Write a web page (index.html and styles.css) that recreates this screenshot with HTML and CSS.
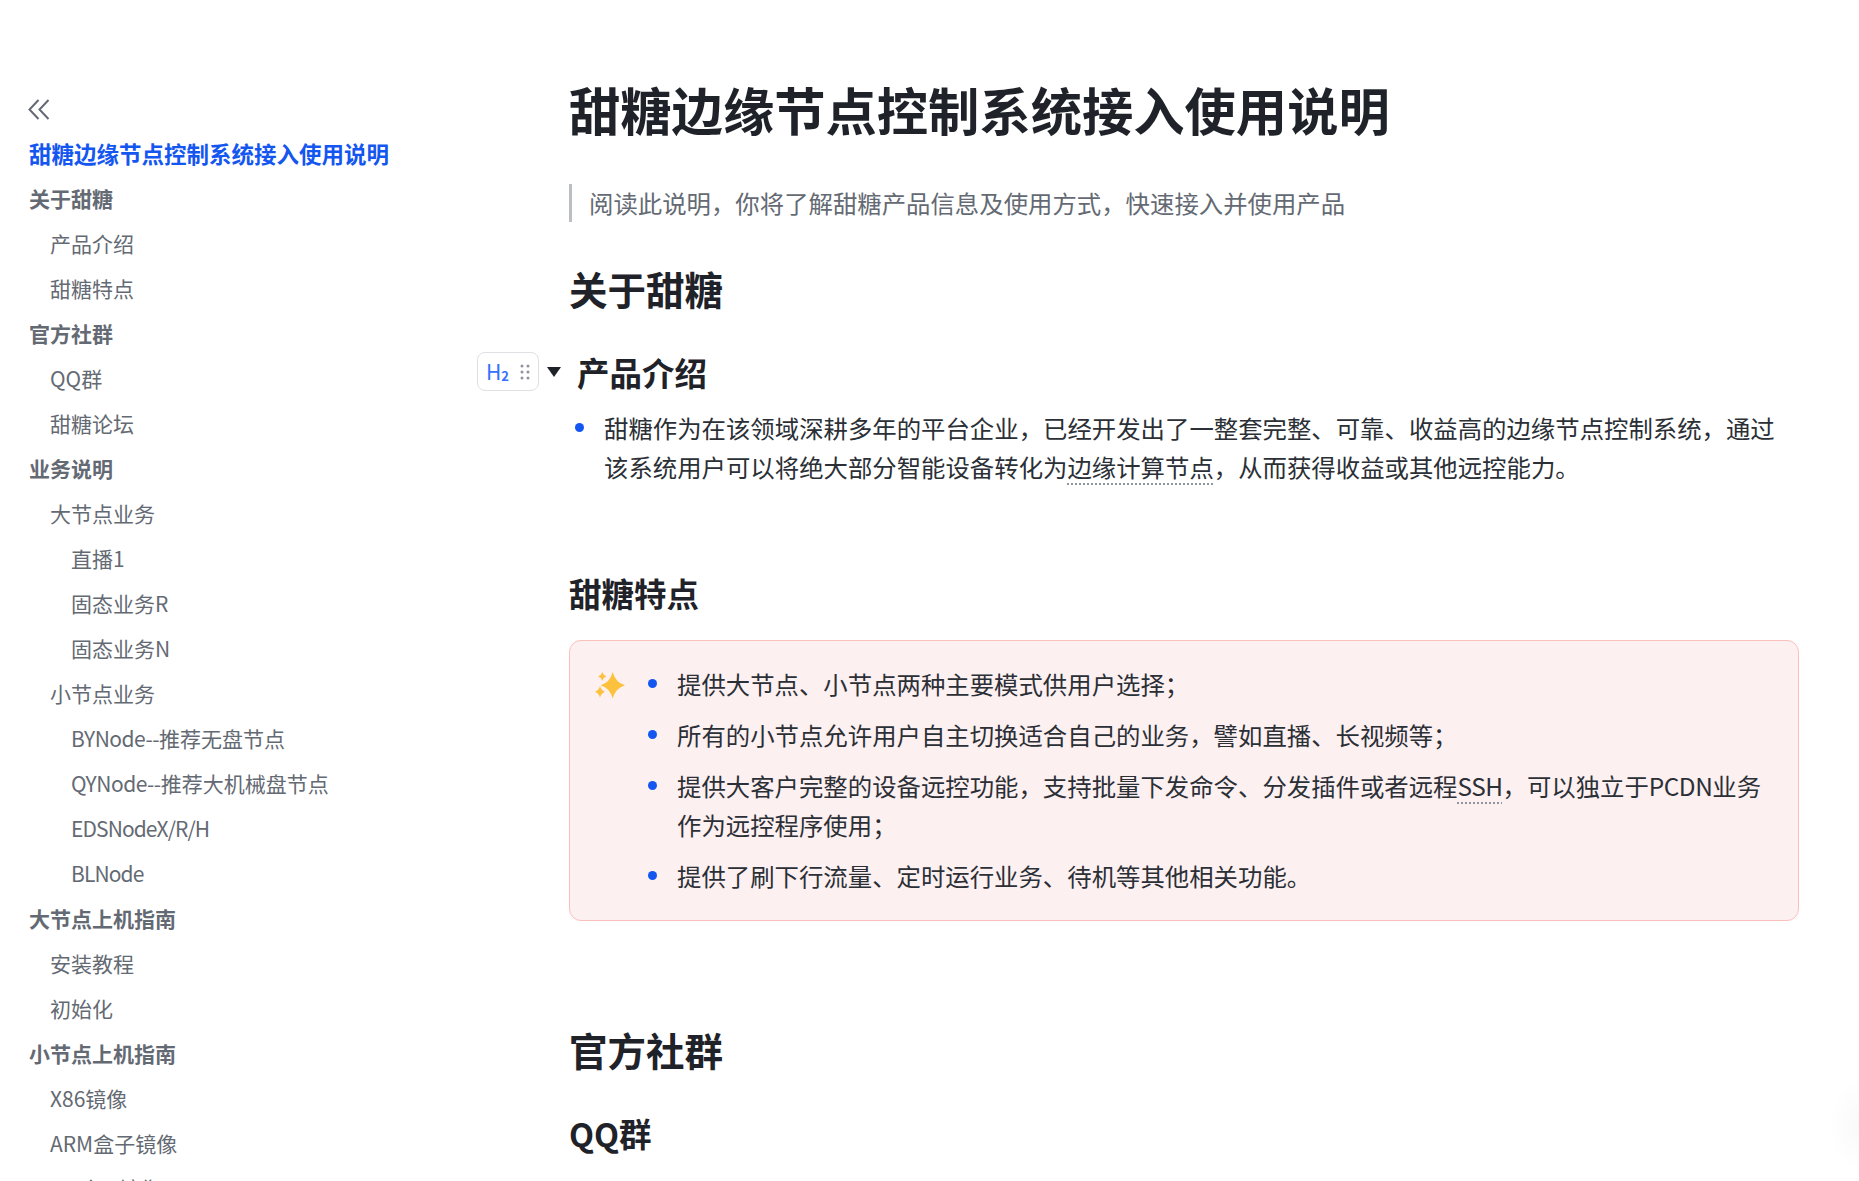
FILE: index.html
```html
<!DOCTYPE html>
<html lang="zh-CN">
<head>
<meta charset="utf-8">
<title>甜糖边缘节点控制系统接入使用说明</title>
<link rel="stylesheet" href="styles.css">
</head>
<body>
<div class="page">
  <aside class="sidebar">
    <svg class="collapse" width="22" height="22" viewBox="0 0 22 22" fill="none" stroke="#646a73" stroke-width="2"><path d="M10.500 2 1.500 11.500 10.500 21"/><path d="M20.500 2 11.500 11.500 20.500 21"/></svg>
    <nav class="toc">
      <a class="toc-title">甜糖边缘节点控制系统接入使用说明</a>
      <a class="l1">关于甜糖</a>
      <a class="l2">产品介绍</a>
      <a class="l2">甜糖特点</a>
      <a class="l1">官方社群</a>
      <a class="l2">QQ群</a>
      <a class="l2">甜糖论坛</a>
      <a class="l1">业务说明</a>
      <a class="l2">大节点业务</a>
      <a class="l3">直播1</a>
      <a class="l3">固态业务R</a>
      <a class="l3">固态业务N</a>
      <a class="l2">小节点业务</a>
      <a class="l3"><span class="lat">BYNode--</span>推荐无盘节点</a>
      <a class="l3"><span class="lat">QYNode--</span>推荐大机械盘节点</a>
      <a class="l3"><span class="lat-tight">EDSNodeX/R/H</span></a>
      <a class="l3"><span class="lat-tight">BLNode</span></a>
      <a class="l1">大节点上机指南</a>
      <a class="l2">安装教程</a>
      <a class="l2">初始化</a>
      <a class="l1">小节点上机指南</a>
      <a class="l2">X86镜像</a>
      <a class="l2">ARM盒子镜像</a>
      <a class="l2">Docker镜像</a>
    </nav>
  </aside>
  <main class="doc">
    <h1>甜糖边缘节点控制系统接入使用说明</h1>
    <blockquote>阅读此说明，你将了解甜糖产品信息及使用方式，快速接入并使用产品</blockquote>
    <h2 class="h-about">关于甜糖</h2>
    <div class="h3-row">
      <div class="block-handle">
        <span class="h-label">H<sub>2</sub></span>
        <svg width="10" height="16" viewBox="0 0 10 16" fill="#8f959e"><circle cx="2" cy="2" r="1.500"/><circle cx="8" cy="2" r="1.500"/><circle cx="2" cy="8" r="1.500"/><circle cx="8" cy="8" r="1.500"/><circle cx="2" cy="14" r="1.500"/><circle cx="8" cy="14" r="1.500"/></svg>
      </div>
      <span class="caret"></span>
      <h3>产品介绍</h3>
    </div>
    <ul class="list">
      <li>甜糖作为在该领域深耕多年的平台企业，已经开发出了一整套完整、可靠、收益高的边缘节点控制系统，通过该系统用户可以将绝大部分智能设备转化为<span class="term">边缘计算节点</span>，从而获得收益或其他远控能力。</li>
    </ul>
    <h3 class="h-feat">甜糖特点</h3>
    <section class="callout">
      <svg class="spark" width="30" height="27" viewBox="0 0 30 27" fill="#fcc23d"><path d="M17.700 0Q20.500 10.500 30 13.300 20.500 16.100 17.700 26.600 14.900 16.100 5.700 13.300 14.900 10.500 17.700 0z"/><path d="M7.300 0Q8.200 3.300 11.500 4.300 8.200 5.300 7.300 8.800 6.400 5.300 3.100 4.300 6.400 3.300 7.300 0z"/><path d="M5 13.700Q6 18.300 10 19.700 6 21.100 5 25.700 4 21.100 0 19.700 4 18.300 5 13.700z"/></svg>
      <ul class="list callout-list">
        <li>提供大节点、小节点两种主要模式供用户选择；</li>
        <li>所有的小节点允许用户自主切换适合自己的业务，譬如直播、长视频等；</li>
        <li>提供大客户完整的设备远控功能，支持批量下发命令、分发插件或者远程<span class="term lat">SSH</span>，可以独立于<span class="lat">PCDN</span>业务作为远控程序使用；</li>
        <li>提供了刷下行流量、定时运行业务、待机等其他相关功能。</li>
      </ul>
    </section>
    <h2 class="h-group">官方社群</h2>
    <h3 class="h-qq">QQ群</h3>
  </main>
</div>
<div class="edge-shadow"></div>
</body>
</html>
```
FILE: styles.css
```css
* { box-sizing: border-box; }
html, body { margin: 0; height: 100%; overflow: hidden; background: #fff; }
body { font-family: "Noto Sans CJK SC", "Noto Sans", sans-serif; color: #1f2329; }
.page { display: flex; height: 1181px; overflow: hidden; }
.sidebar { width: 569px; flex: none; padding: 98px 0 0 28px; }
.collapse { display: block; margin-bottom: 11px; }
.toc { display: flex; flex-direction: column; padding-left: 1px; }
.toc a { display: block; height: 45px; line-height: 45px; font-size: 21px; color: #646a73; white-space: nowrap; }
.toc .toc-title { font-size: 22.500px; font-weight: 700; color: #1456f0; }
.toc .l1 { font-weight: 700; }
.toc .l2 { padding-left: 21px; }
.toc .l3 { padding-left: 42px; }
.lat { letter-spacing: -.5px; }
.lat-tight { letter-spacing: -.9px; }
.doc { width: 1230px; flex: none; padding-top: 74px; }
h1, h2, h3 { margin: 0; font-weight: 700; color: #1f2329; }
h1 { font-size: 51.300px; line-height: 70px; }
blockquote { margin: 40px 0 0; height: 38px; line-height: 38px; border-left: 3px solid #bbbfc4; padding-left: 17px; font-size: 24.400px; color: #646a73; }
h2 { font-size: 38.500px; line-height: 54px; }
.h-about { margin-top: 39px; }
h3 { font-size: 32.500px; line-height: 46px; }
.h3-row { display: flex; align-items: center; margin-top: 34px; position: relative; padding-left: 8px; }
.block-handle { position: absolute; left: -92px; top: 3px; width: 62px; height: 39px; border: 1px solid #dee0e3; border-radius: 8px; display: flex; align-items: center; gap: 11px; padding-left: 8px; background: #fff; }
.h-label { font-size: 21px; line-height: 1; color: #3370ff; }
.h-label sub { font-size: 13px; line-height: 0; vertical-align: -1px; font-weight: 700; }
.caret { position: absolute; left: -22px; top: 18px; border-style: solid; border-width: 10px 7px 0; border-color: #1f2329 transparent transparent; }
.list { list-style: none; margin: 0; padding: 0; font-size: 24.400px; line-height: 39px; color: #2b2f36; }
.list li { position: relative; padding-left: 35px; margin-top: 13px; }
.list li::before { content: ""; position: absolute; left: 6px; top: 15px; width: 9px; height: 9px; border-radius: 50%; background: #1456f0; }
.term { text-decoration: underline dotted #8f959e 2px; text-underline-offset: 6px; }
.h-feat { margin-top: 84px; }
.callout { display: flex; margin-top: 24px; height: 281px; background: #fdf0f1; border: 1px solid #fbbfbc; border-radius: 12px; padding: 11px 0 0 24px; position: relative; }
.spark { position: absolute; left: 25px; top: 31px; }
.callout-list { margin-left: 50px; width: 1130px; }
.callout-list li { margin-top: 12px; padding-left: 33px; }
.callout-list li::before { left: 4px; }
.h-group { margin-top: 101px; }
.h-qq { margin-top: 34px; }
.edge-shadow { position: fixed; right: 0; top: 1080px; width: 30px; height: 90px; background: radial-gradient(ellipse at right, rgba(0,0,0,.025), transparent 70%); }
```
